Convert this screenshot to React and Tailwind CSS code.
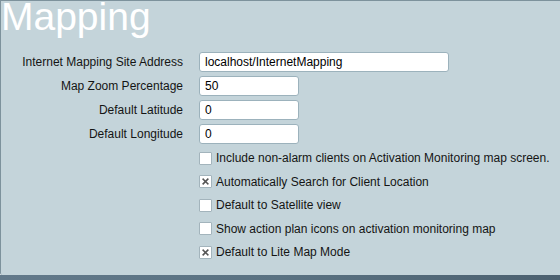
const fields = [
  { label: "Internet Mapping Site Address", value: "localhost/InternetMapping", wide: true },
  { label: "Map Zoom Percentage", value: "50" },
  { label: "Default Latitude", value: "0" },
  { label: "Default Longitude", value: "0" },
];

const options = [
  { label: "Include non-alarm clients on Activation Monitoring map screen.", checked: false },
  { label: "Automatically Search for Client Location", checked: true },
  { label: "Default to Satellite view", checked: false },
  { label: "Show action plan icons on activation monitoring map", checked: false },
  { label: "Default to Lite Map Mode", checked: true },
];

function CheckBox({ checked }) {
  return (
    <span className="w-[13px] h-[13px] shrink-0 bg-white border border-[#a3b4bc] rounded-[1px] flex items-center justify-center">
      {checked && (
        <svg width="7" height="7" viewBox="0 0 7 7">
          <path d="M1.2 1.2L5.8 5.8M5.8 1.2L1.2 5.8" stroke="#555" strokeWidth="1.6" strokeLinecap="square" />
        </svg>
      )}
    </span>
  );
}

export default function App() {
  return (
    <div className="w-[560px] h-[280px] overflow-hidden flex flex-col font-['Liberation_Sans',Arial,sans-serif] text-[12px] text-[#141414]">
      <div className="h-[275px] bg-[#c4d4da] border-t border-l border-[#7d929c] rounded-bl-[2px]">
        <h1 className="-mt-[6.5px] text-[39px] leading-[44px] text-white font-normal">Mapping</h1>

        {/* text fields */}
        <div className="mt-[13.5px] flex flex-col gap-1">
          {fields.map((f) => (
            <div key={f.label} className="flex items-center h-5">
              <div className="w-[182px] text-right">{f.label}</div>
              <input
                readOnly
                value={f.value}
                className={`ml-4 h-5 ${f.wide ? "w-[250px]" : "w-[100px]"} bg-white border border-[#9cb2bc] rounded-[3px] px-[5px] text-[12px] text-black outline-none`}
              />
            </div>
          ))}
        </div>

        {/* options */}
        <div className="mt-[2.5px] pl-[198px] flex flex-col">
          {options.map((o) => (
            <label key={o.label} className="h-[23.5px] flex items-center gap-1">
              <CheckBox checked={o.checked} />
              <span>{o.label}</span>
            </label>
          ))}
        </div>
      </div>
      <div className="flex-1 bg-gradient-to-r from-[#62798a] via-[#5a7282] to-[#4c6170]" />
    </div>
  );
}
